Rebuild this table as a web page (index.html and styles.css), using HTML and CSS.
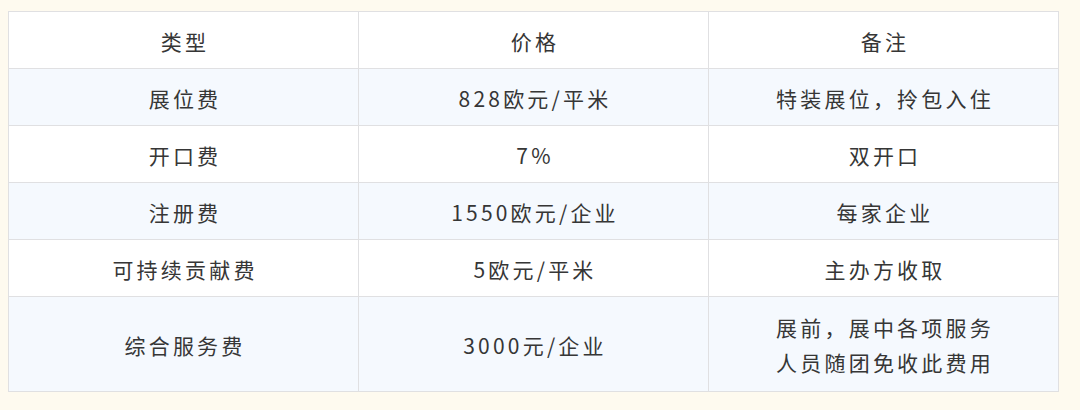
FILE: index.html
```html
<!DOCTYPE html>
<html lang="zh">
<head>
<meta charset="utf-8">
<link rel="stylesheet" href="styles.css">
</head>
<body>
<table class="fees">
  <colgroup><col class="c"><col class="c"><col class="c"></colgroup>
  <tr class="head"><td>类型</td><td>价格</td><td>备注</td></tr>
  <tr class="alt"><td>展位费</td><td>828欧元/平米</td><td>特装展位，拎包入住</td></tr>
  <tr><td>开口费</td><td>7%</td><td>双开口</td></tr>
  <tr class="alt"><td>注册费</td><td>1550欧元/企业</td><td>每家企业</td></tr>
  <tr><td>可持续贡献费</td><td>5欧元/平米</td><td>主办方收取</td></tr>
  <tr class="alt last"><td>综合服务费</td><td>3000元/企业</td><td>展前，展中各项服务<br>人员随团免收此费用</td></tr>
</table>
</body>
</html>
```
FILE: styles.css
```css
html, body {
  margin: 0;
  padding: 0;
  background: #fefaef;
}
body {
  padding: 11px 0 0 8px;
  font-family: "Noto Sans CJK SC", "Noto Sans", sans-serif;
  color: #363636;
}
.fees {
  border-collapse: collapse;
  width: 1050px;
  table-layout: fixed;
  background: #ffffff;
}
.fees .c { width: 350px; }
.fees td {
  border: 1.5px solid #e0e0e2;
  height: 57px;
  padding: 0;
  text-align: center;
  vertical-align: middle;
  font-size: 21px;
  letter-spacing: 3.2px;
  line-height: 35px;
  box-sizing: border-box;
  padding-top: 2px;
  padding-left: 3px;
}
.fees tr.alt td { background: #f5f9fe; }
.fees tr.last td { height: 95px; }
```
